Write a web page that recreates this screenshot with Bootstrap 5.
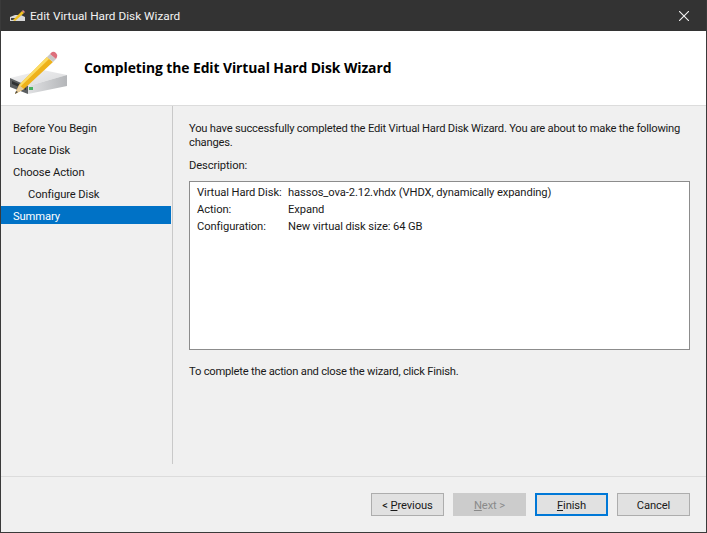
<!DOCTYPE html>
<html><head><meta charset="utf-8">
<link href="https://cdn.jsdelivr.net/npm/bootstrap@5.3.0/dist/css/bootstrap.min.css" rel="stylesheet">
<style>
html,body{height:100%}
body{background:#f0f0f0;font-family:"Roboto","Liberation Sans",sans-serif;font-size:11.2px;letter-spacing:-.1px;color:#1a1a1a;line-height:14px}
.win{height:533px;width:707px;border:1px solid #3a3a3a;border-top:0;overflow:hidden}
.tbar{height:31px;background:#333;color:#f2f2f2;font-size:11.8px;letter-spacing:0;margin:0 -1px;padding-left:9px}
.tbar svg.ti{width:17px;height:15px;margin-right:4px}
.xbtn{width:46px;height:31px}
.hdr{height:75px;background:#fff;border-bottom:1px solid #dcdcdc;padding-left:7px}
.hdr svg{width:62px;height:52px}
.hdr h1{font-size:13.9px;font-weight:700;margin:0 0 0 14px;color:#000;font-family:"Open Sans",sans-serif;letter-spacing:-.08px}
.mid{height:370px}
.side{width:170px;margin-right:1px;padding-top:11px}
.stp{height:22px;padding:2px 0 0 12px;display:flex;align-items:center}
.stp.sub{padding-left:27px}
.stp.on{background:#0072c6;color:#fff;height:18px;margin-top:1px;padding-top:3px}
.vline{width:1px;background:#c9c9c9;height:358px}
.cnt{padding:16px 16px 0 16px;flex:1}
.cnt p{margin:0}
.tight{letter-spacing:-.22px}
.lead1{margin-bottom:9px!important}
.box{background:#fff;border:1px solid #8c8c8c;height:169px;margin:8px 0 15px;padding:1px 7px}
.rw{height:17px;display:flex;align-items:center;padding-top:2px}
.rw b{font-weight:400;width:91px;flex:none}
.foot{border-top:1px solid #dcdcdc;height:56px;padding:16px 16px 0 0}
.wbtn{width:73px;height:23px;background:#e1e1e1;border:1px solid #adadad;border-radius:0;font-size:11.2px;letter-spacing:-.1px;padding:2px 0 0;margin-left:9px;color:#1a1a1a;line-height:20px;--bs-btn-hover-bg:#e1e1e1}
.wbtn.dis{background:#ccc;border-color:#ccc;color:#8a8a8a;opacity:1}
.wbtn.def{border:2px solid #0078d7;padding-top:1px}
.wbtn u{text-underline-offset:1px}
</style></head><body>
<div class="win d-flex flex-column">
<div class="tbar d-flex align-items-center">
<svg class="ti" viewBox="0 0 17 15"><path d="M1 9l5-2h6l4 2v4H1z" fill="#d8d8d8"/><rect x="2" y="10" width="4" height="2" fill="#444"/><path d="M4 12L13 3l2 2-9 8z" fill="#f0c020"/><path d="M13 3l1-1 2 2-1 1z" fill="#e58a8a"/></svg>
<span class="flex-grow-1">Edit Virtual Hard Disk Wizard</span>
<span class="xbtn d-flex align-items-center justify-content-center"><svg width="10" height="10" viewBox="0 0 10 10"><path d="M0 0L10 10M10 0L0 10" stroke="#f4f4f4" stroke-width="1.1"/></svg></span>
</div>
<div class="hdr d-flex align-items-center">
<svg viewBox="7 43 62 52">
<defs>
<linearGradient id="rf" x1="0" y1="0" x2="1" y2="0"><stop offset="0" stop-color="#e0e1e3"/><stop offset="1" stop-color="#b4b6b9"/></linearGradient>
<linearGradient id="tp" x1="0" y1="0" x2="1" y2="1"><stop offset="0" stop-color="#f2f2f3"/><stop offset="1" stop-color="#d8d9db"/></linearGradient>
</defs>
<path d="M9 79L42 71L66 76L27 87Z" fill="url(#tp)"/>
<path d="M27 87L66 76V87L27 95Z" fill="url(#rf)"/>
<path d="M9 79L27 87V95L9 88Z" fill="#5b5e60"/>
<path d="M11 82L25 88V91L11 85Z" fill="#2f3133"/>
<rect x="28" y="88" width="4" height="3" fill="#46b060"/>
<path d="M14 95L18 86L46 58L52 63L23 90Z" fill="#eeb21a"/>
<path d="M18 86L46 58L48 60L19 88Z" fill="#fbdc62"/>
<path d="M14 95L18 86L23 90Z" fill="#e6cb9c"/>
<path d="M14 95L15 92L17 93Z" fill="#444"/>
<path d="M46 58L49 55L55 60L52 63Z" fill="#c8c8c8"/>
<path d="M49 55L51 53Q53 52 55 54Q57 56 56 58L55 60Z" fill="#dd6f7c"/>
</svg>
<h1>Completing the Edit Virtual Hard Disk Wizard</h1>
</div>
<div class="mid d-flex">
<div class="side">
<div class="stp">Before You Begin</div>
<div class="stp">Locate Disk</div>
<div class="stp">Choose Action</div>
<div class="stp sub">Configure Disk</div>
<div class="stp on">Summary</div>
</div>
<div class="vline"></div>
<div class="cnt">
<p class="lead1 tight">You have successfully completed the Edit Virtual Hard Disk Wizard. You are about to make the following changes.</p>
<p>Description:</p>
<div class="box">
<div class="rw"><b>Virtual Hard Disk:</b><span>hassos_ova-2.12.vhdx (VHDX, dynamically expanding)</span></div>
<div class="rw"><b>Action:</b><span>Expand</span></div>
<div class="rw"><b>Configuration:</b><span>New virtual disk size: 64 GB</span></div>
</div>
<p class="tight">To complete the action and close the wizard, click Finish.</p>
</div>
</div>
<div class="foot d-flex justify-content-end align-items-start">
<button class="btn wbtn">&lt; <u>P</u>revious</button>
<button class="btn wbtn dis"><u>N</u>ext &gt;</button>
<button class="btn wbtn def"><u>F</u>inish</button>
<button class="btn wbtn">Cancel</button>
</div>
</div>
<script src="https://cdn.jsdelivr.net/npm/bootstrap@5.3.0/dist/js/bootstrap.bundle.min.js"></script>
</body></html>
